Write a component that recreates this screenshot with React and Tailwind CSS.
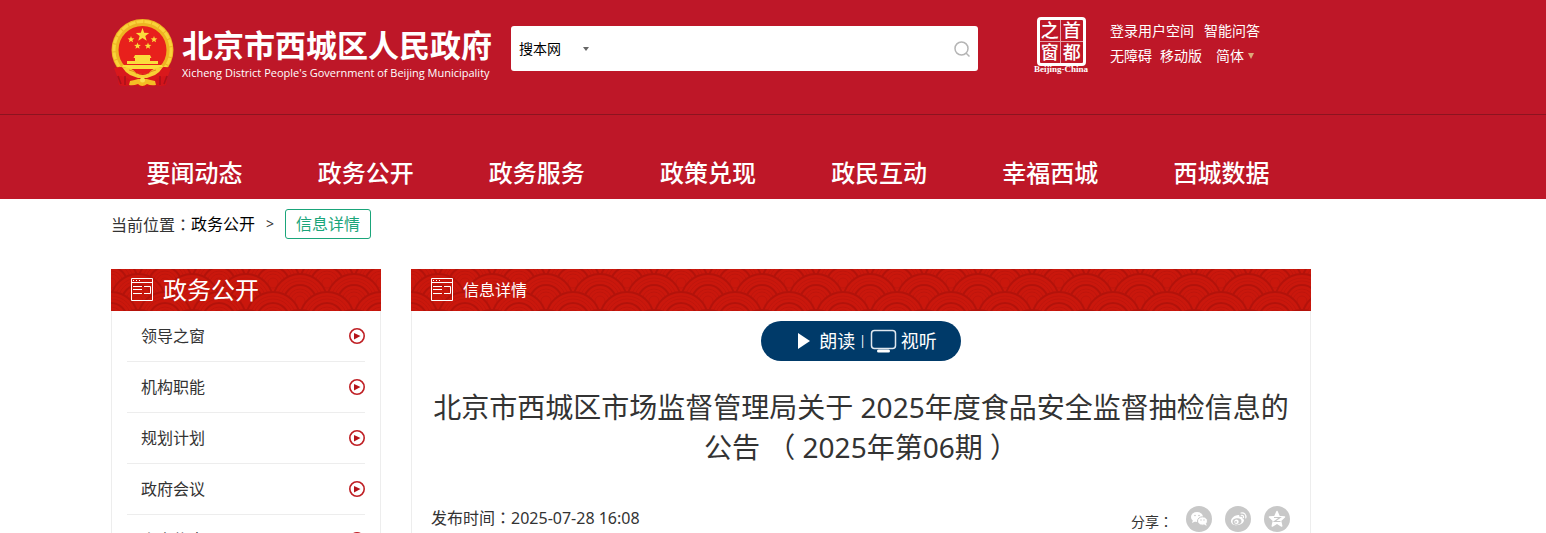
import React, { useState } from 'react';

const navItems = ['要闻动态', '政务公开', '政务服务', '政策兑现', '政民互动', '幸福西城', '西城数据'];

const sideItems = ['领导之窗', '机构职能', '规划计划', '政府会议', '人事信息'];

const Emblem = () => (
  <svg className="shrink-0" width="63" height="70" viewBox="0 0 63 70" aria-hidden="true">
    <defs>
      <path id="star" d="M0-7l1.700 4.700 5 .2-3.900 3 1.400 4.800L0 3l-4.200 2.700 1.400-4.800-3.900-3 5-.2z" />
    </defs>
    <path d="M9 50Q6 60 8 66q6 2 12 0l12 2 12-2q6 2 11 0 2-6-1-16z" fill="#d3141b" />
    <circle cx="31.500" cy="31" r="31" fill="#eeb422" />
    <circle cx="31.500" cy="31" r="28.500" fill="none" stroke="#f9d33a" strokeWidth="3" strokeDasharray="7 1" />
    <circle cx="31.500" cy="31" r="24" fill="#e8201c" />
    <g fill="#fbdc3c">
      <use href="#star" x="31.500" y="16" />
      <use href="#star" transform="translate(20 20.500) scale(.5)" />
      <use href="#star" transform="translate(43 20.500) scale(.5)" />
      <use href="#star" transform="translate(26.500 27) scale(.5)" />
      <use href="#star" transform="translate(37 27) scale(.5)" />
      <path d="M24 36h15l1.500 3H39v3h8v3H16v-3h8v-3h-1.500z" />
      <path d="M12 46h39l2 4H10z" />
    </g>
    <path d="M3 49q10-3 18 3 10 6 21 0 8-6 18-3l-3 8q-9 0-14 5-11 5-23 0-5-5-14-5z" fill="#d9181c" />
    <path d="M11 48q10 0 14 6 7 4 13 0 4-6 14-6-3 5-8 8l-8 3h-9l-8-3q-5-3-8-8z" fill="#f8cf35" />
    <path d="M18 51q6 1 8 4M45 51q-6 1-8 4" fill="none" stroke="#e08a1c" />
    <path d="M7 57l3 8M14 57v9M56 57l-3 8M49 57v9" stroke="#a9101a" strokeWidth="1.500" fill="none" />
    <path d="M19 62q5-1 8-2h9q3 1 8 2l1 4q-5 1-9-1-5 4-9 0-5 2-9 1z" fill="#f4bd24" />
    <circle cx="31.500" cy="61" r="2.500" fill="#fae04e" />
  </svg>
);

const WindowIcon = () => (
  <svg width="22" height="24" viewBox="0 0 22 24" fill="none" stroke="#fff" aria-hidden="true">
    <path d="M.5.5h21v22H.5zM.5 4.500h21M2 8.500h9M2 11.500h9M2 15.500h9M13 8.500h6.500v7H13" />
    <path d="M2 2.500h1M5 2.500h1M8 2.500h1" />
  </svg>
);

const CirclePlay = () => (
  <svg width="16" height="16" viewBox="0 0 16 16" aria-hidden="true">
    <circle cx="8" cy="8" r="7.200" fill="none" stroke="#bf1f24" strokeWidth="1.600" />
    <path d="M5 5v6.500L11.500 8z" fill="#b5141a" />
  </svg>
);

const WavePattern = ({ id }) => (
  <svg className="absolute inset-0 size-full" aria-hidden="true">
    <defs>
      <g id={`${id}-fan`} fill="none" stroke="#bf140b">
        <circle r="27" fill="#ca170c" stroke="#b3120a" strokeWidth="2" />
        <circle r="23" />
        <circle r="20" />
        <circle r="16" stroke="#b3120a" strokeWidth="2" />
        <circle r="12" />
        <circle r="9" />
        <circle r="5" />
      </g>
      <pattern id={id} width="54" height="36" patternUnits="userSpaceOnUse">
        <rect width="54" height="36" fill="#ca170c" />
        <use href={`#${id}-fan`} x="0" y="14" />
        <use href={`#${id}-fan`} x="54" y="14" />
        <use href={`#${id}-fan`} x="27" y="32" />
        <use href={`#${id}-fan`} x="0" y="50" />
        <use href={`#${id}-fan`} x="54" y="50" />
      </pattern>
    </defs>
    <rect width="100%" height="100%" fill={`url(#${id})`} />
  </svg>
);

const PanelHeader = ({ id, title, large }) => (
  <div className="relative flex h-[42px] items-center overflow-hidden px-5 text-white">
    <WavePattern id={id} />
    <div className="relative flex items-center gap-2.5">
      <WindowIcon />
      <h2 className={large ? 'text-2xl' : 'text-base'}>{title}</h2>
    </div>
  </div>
);

const Colon = () => <span className="font-['Noto_Sans_CJK_TC',sans-serif]">：</span>;

const ShareButton = ({ label, children }) => (
  <button type="button" aria-label={label} className="size-[26px] rounded-full bg-[#c8c8c8]">
    <svg width="26" height="26" viewBox="0 0 26 26" aria-hidden="true">{children}</svg>
  </button>
);

const SealBadge = () => (
  <a href="#" className="flex w-14 flex-col items-center text-white">
    <div className="grid size-[49px] grid-cols-2 rounded-[4px] border-[3px] border-white text-lg leading-[21px] font-medium">
      <span className="border-r border-b border-white/60 text-center">之</span>
      <span className="border-b border-white/60 text-center">首</span>
      <span className="border-r border-white/60 text-center">窗</span>
      <span className="text-center">都</span>
    </div>
    <span className="font-['Liberation_Serif',serif] text-[9px] leading-[7px] font-bold">Beijing-China</span>
  </a>
);

const App = () => {
  const [keyword, setKeyword] = useState('');

  return (
    <div className="h-screen overflow-hidden bg-white font-['Noto_Sans','Noto_Sans_CJK_SC',sans-serif] text-[#333]">
      <header className="bg-[#be1728] text-white">
        <div className="border-b border-[#8c1420] pr-[124px]">
          <div className="mx-auto flex h-[114px] max-w-[1200px] items-start">
            <a href="#" className="mt-[19px] flex w-[400px] shrink-0 gap-2">
              <Emblem />
              <div className="pt-2 whitespace-nowrap">
                <h1 className="text-[31px] leading-9 font-bold">北京市西城区人民政府</h1>
                <p className="font-['Open_Sans',sans-serif] text-[11px] leading-5 font-medium">Xicheng District People's Government of Beijing Municipality</p>
              </div>
            </a>
            <form className="mt-[26px] flex h-[45px] w-[467px] items-center rounded-[3px] bg-white px-2 text-black" onSubmit={(e) => e.preventDefault()}>
              <label className="relative flex items-center">
                <select aria-label="搜索范围" className="w-[72px] appearance-none bg-transparent text-sm">
                  <option>搜本网</option>
                </select>
                <svg className="pointer-events-none absolute right-0.5" width="6" height="4" viewBox="0 0 6 4" aria-hidden="true">
                  <path d="M0 0h6L3 4z" fill="#666" />
                </svg>
              </label>
              <input aria-label="搜索" value={keyword} onChange={(e) => setKeyword(e.target.value)} className="min-w-0 flex-1 px-3 text-sm outline-none" />
              <button type="submit" aria-label="搜索">
                <svg width="16" height="16" viewBox="0 0 16 16" fill="none" stroke="#b5b5b5" strokeWidth="1.500" aria-hidden="true">
                  <circle cx="7.500" cy="7.500" r="6.500" />
                  <path d="M12 12l3.500 3.500" />
                </svg>
              </button>
            </form>
            <div className="mt-[17px] ml-[55px]">
              <SealBadge />
            </div>
            <div className="mt-[18px] ml-[21px] text-sm leading-[25px] whitespace-nowrap">
              <div className="flex gap-2.5">
                <a href="#">登录用户空间</a>
                <a href="#">智能问答</a>
              </div>
              <div className="flex">
                <a href="#">无障碍</a>
                <a href="#" className="ml-2">移动版</a>
                <button type="button" className="ml-3.5 flex items-center gap-1">
                  简体
                  <svg width="6" height="6" viewBox="0 0 6 6" aria-hidden="true">
                    <path d="M0 0h6L3 6z" fill="#dca878" />
                  </svg>
                </button>
              </div>
            </div>
          </div>
        </div>
        <nav className="pr-[124px]">
          <div className="mx-auto max-w-[1200px]">
            <ul className="-ml-0.5 grid h-[84px] grid-cols-7 items-end pr-1 pb-2">
              {navItems.map((item) => (
                <li key={item} className="text-center text-2xl leading-9 font-medium">
                  <a href="#">{item}</a>
                </li>
              ))}
            </ul>
          </div>
        </nav>
      </header>

      <div className="pr-[124px]">
        <div className="mx-auto max-w-[1200px]">
          <div className="flex h-[70px] items-start pt-2.5 text-base leading-[30px]">
            <span>当前位置<Colon /></span>
            <a href="#" className="text-black">政务公开</a>
            <span className="mx-[11px] text-sm leading-[30px]">&gt;</span>
            <a href="#" className="rounded-[3px] border border-[#1aa57a] px-2.5 leading-7 text-[#1aa57a]">信息详情</a>
          </div>

          <div className="flex items-start gap-[30px]">
            <aside className="w-[270px] shrink-0">
              <PanelHeader id="side" title="政务公开" large />
              <ul className="border-x border-[#ededed] px-[15px]">
                {sideItems.map((item) => (
                  <li key={item} className="border-b border-[#ededed]">
                    <a href="#" className="flex h-[50px] items-center justify-between pl-3.5 text-base">
                      {item}
                      <CirclePlay />
                    </a>
                  </li>
                ))}
              </ul>
            </aside>

            <main className="min-w-0 flex-1">
              <PanelHeader id="main" title="信息详情" />
              <div className="border-x border-[#ededed] px-[19px] pt-2.5 pb-10">
                <div className="mx-auto flex h-10 w-[200px] items-center justify-center rounded-full bg-[#003a69] pl-3 text-lg text-white">
                  <button type="button" className="flex items-center gap-2">
                    <svg width="14" height="16" viewBox="0 0 14 16" aria-hidden="true">
                      <path d="M1 0v16l12-8z" fill="#fff" />
                    </svg>
                    朗读
                  </button>
                  <span className="mx-1 text-xs">|</span>
                  <button type="button" className="flex items-center gap-1">
                    <svg width="27" height="24" viewBox="0 0 27 24" aria-hidden="true">
                      <rect x="1.500" y="1.500" width="24" height="18" rx="3" fill="none" stroke="#dfe8ef" strokeWidth="1.500" />
                      <rect x="7" y="20.500" width="13" height="3" rx="1.500" fill="#fff" />
                    </svg>
                    视听
                  </button>
                </div>
                <h1 className="mt-[26px] text-center text-[28px] leading-10">
                  北京市西城区市场监督管理局关于 2025年度食品安全监督抽检信息的公告 （ 2025年第06期 ）
                </h1>
                <div className="mt-8 flex items-start justify-between">
                  <p className="pt-1 text-base leading-7">发布时间<Colon />2025-07-28 16:08</p>
                  <div className="flex items-center gap-[13px] pt-[7px] pr-px">
                    <span className="pt-1 text-sm">分享<Colon /></span>
                    <ShareButton label="微信">
                      <g fill="#fff">
                        <ellipse cx="11" cy="11" rx="6" ry="5" />
                        <path d="M7 14l-1 3 4-2z" />
                        <ellipse cx="16.500" cy="15" rx="5" ry="4.200" stroke="#c8c8c8" />
                        <path d="M18 18l2.500 2-.5-3z" />
                      </g>
                      <g fill="#c8c8c8">
                        <circle cx="9" cy="9.500" r=".8" />
                        <circle cx="13" cy="9.500" r=".8" />
                        <circle cx="15" cy="14" r=".7" />
                        <circle cx="18" cy="14" r=".7" />
                      </g>
                    </ShareButton>
                    <ShareButton label="微博">
                      <path d="M11 9.500c2-1 4-.8 3.500 1.500 2-.8 3.500-.2 3 1.500 2.500 1 1.500 3.500-.5 5-3 2.200-8 2.200-10 .2-2.500-2.700 0-7 4-8.200z" fill="#fff" />
                      <ellipse cx="12" cy="15.500" rx="4.500" ry="3.200" fill="#c8c8c8" transform="rotate(-8 12 15.500)" />
                      <circle cx="11.500" cy="15.700" r="2.200" fill="#fff" />
                      <circle cx="11" cy="16" r=".9" fill="#c8c8c8" />
                      <path d="M16 7c3-.8 5.500 1.500 4.800 5M16.300 9.300c1.500-.2 2.500.7 2.200 2.300" fill="none" stroke="#fff" strokeWidth="1.200" strokeLinecap="round" />
                    </ShareButton>
                    <ShareButton label="QQ空间">
                      <path d="M13 5.500l2.200 5 5.300.5-4 3.600 1.200 5.400-4.700-2.800L8.300 20l1.200-5.400-4-3.600 5.300-.5z" fill="#fff" stroke="#fff" strokeWidth="1.500" strokeLinejoin="round" />
                      <path d="M10 11.500h6l-5.500 4h6" fill="none" stroke="#c8c8c8" strokeWidth="1.200" />
                    </ShareButton>
                  </div>
                </div>
              </div>
            </main>
          </div>
        </div>
      </div>
    </div>
  );
};

export default App;
